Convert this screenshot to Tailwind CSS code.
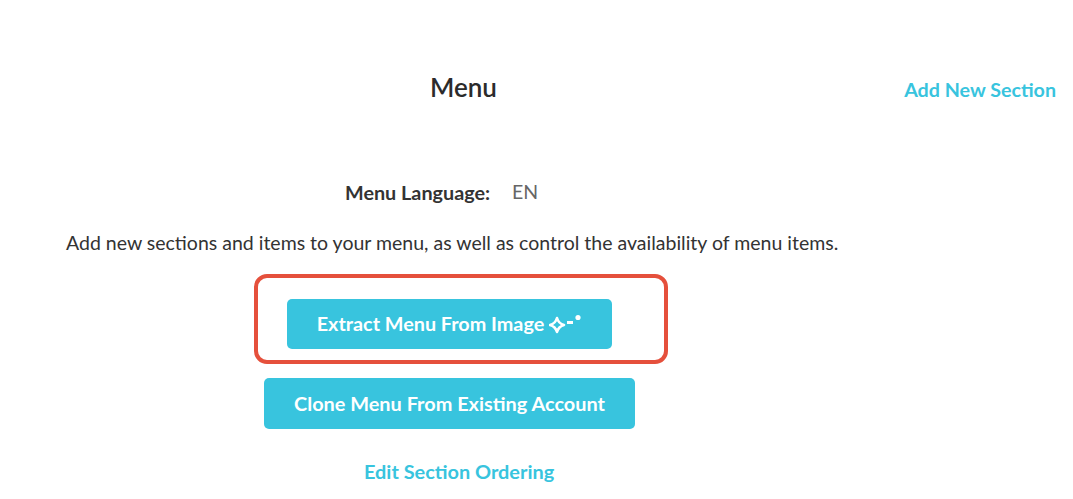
<!DOCTYPE html>
<html lang="en">
<head>
  <meta charset="UTF-8" />
  <script src="https://cdn.jsdelivr.net/npm/@tailwindcss/browser@4"></script>
</head>
<body class="bg-white font-['Lato',sans-serif] text-[#333]">
  <div class="w-[1073px] h-[499px] overflow-hidden">
    <!-- header -->
    <header class="flex items-center pt-[71px] h-[103px]">
      <h1 class="ml-[430px] text-[26px] leading-[30px] font-semibold text-[#2b2b2b]">Menu</h1>
      <a class="ml-auto mr-[17px] mt-[5px] text-[19.7px] font-bold text-[#38c4de]">Add New Section</a>
    </header>
    <!-- language -->
    <div class="flex items-center mt-[76px] ml-[345px] h-[28px]">
      <span class="text-[19.8px] font-bold text-[#333]">Menu Language:</span>
      <span class="ml-[22px] mb-[2px] text-[19.5px] text-[#666]">EN</span>
    </div>
    <p class="mt-[24px] ml-[66px] text-[19.5px] leading-[24px] text-[#333]">Add new sections and items to your menu, as well as control the availability of menu items.</p>
    <!-- buttons -->
    <div class="mt-[19px] ml-[254px] w-[414px] h-[90px] border-[4px] border-[#e5503c] rounded-[13px] pl-[29px] pt-[21px]">
      <button class="w-[325px] h-[50px] rounded-[5px] bg-[#38c4de] text-white text-[19.8px] font-bold flex items-center justify-center gap-[5px]">
        Extract Menu From Image
        <svg width="33" height="24" viewBox="0 0 33 24" fill="none" stroke="white" stroke-width="2.6" stroke-linejoin="round"><path d="M8 6Q9.500 11.500 15 13 9.500 14.500 8 20 6.500 14.500 1 13 6.500 11.500 8 6z"/><path d="M18 10.500h6" stroke-width="3"/><circle cx="29" cy="5.500" r="2.600" fill="white" stroke="none"/></svg>
      </button>
    </div>
    <button class="mt-[14px] ml-[264px] w-[371px] h-[51px] rounded-[5px] bg-[#38c4de] text-white text-[19.9px] font-bold">Clone Menu From Existing Account</button>
    <div class="mt-[28px] ml-[364px] text-[19.9px] font-bold text-[#38c4de]">Edit Section Ordering</div>
  </div>
</body>
</html>
